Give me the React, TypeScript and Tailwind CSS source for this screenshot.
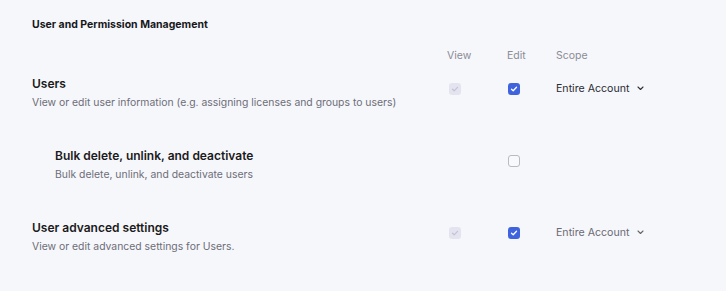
import React from "react";

function Box({ state }: { state: "checked" | "disabled" | "empty" }) {
  if (state === "checked")
    return (
      <div className="w-[12px] h-[12px] rounded-[3px] bg-[#3f63dc] flex items-center justify-center">
        <svg width="8" height="8" viewBox="0 0 8 8" fill="none">
          <path d="M1.5 4.2L3.2 5.8L6.5 2.3" stroke="white" strokeWidth="1.3" strokeLinecap="round" strokeLinejoin="round" />
        </svg>
      </div>
    );
  if (state === "disabled")
    return (
      <div className="w-[12px] h-[12px] rounded-[3px] bg-[#e3e4f0] flex items-center justify-center">
        <svg width="8" height="8" viewBox="0 0 8 8" fill="none">
          <path d="M1.5 4.2L3.2 5.8L6.5 2.3" stroke="#c3c4d0" strokeWidth="1.2" strokeLinecap="round" strokeLinejoin="round" />
        </svg>
      </div>
    );
  return <div className="w-[12px] h-[12px] rounded-[3px] border border-[#b9bac2] bg-[#f8f9fc]" />;
}

function Scope({ muted }: { muted?: boolean }) {
  return (
    <div className={"flex items-center text-[10.6px] " + (muted ? "text-[#6a6a74]" : "text-[#2a2a33]")}>
      <span>Entire Account</span>
      <svg className="ml-[8px]" width="7" height="5" viewBox="0 0 7 5" fill="none">
        <path d="M1 1L3.5 3.5L6 1" stroke={muted ? "#666" : "#333"} strokeWidth="1.1" strokeLinecap="round" strokeLinejoin="round" />
      </svg>
    </div>
  );
}

function Row({
  title,
  desc,
  indent,
  view,
  edit,
  scope,
  muted,
  className,
}: {
  title: string;
  desc: string;
  indent?: boolean;
  view?: "checked" | "disabled" | "empty";
  edit?: "checked" | "disabled" | "empty";
  scope?: boolean;
  muted?: boolean;
  className?: string;
}) {
  return (
    <div className={"flex " + (className ?? "")}>
      <div className={"w-[415px] flex flex-col " + (indent ? "pl-[23px]" : "")}>
        <div className="text-[12px] font-semibold text-[#1a1a20] leading-[20px]">{title}</div>
        <div className="text-[10.4px] text-[#6d6d78] leading-[18px]">{desc}</div>
      </div>
      <div className="w-[60px] pl-[2px] pt-[9px]">{view && <Box state={view} />}</div>
      <div className="w-[49px] pl-[1px] pt-[9px]">{edit && <Box state={edit} />}</div>
      <div className="pt-[7px]">{scope && <Scope muted={muted} />}</div>
    </div>
  );
}

export default function App() {
  return (
    <div
      className="w-[726px] h-[291px] bg-[#f6f7fb] pl-[32px] pt-[17px]"
      style={{ fontFamily: "Inter, 'Liberation Sans', sans-serif" }}
    >
      <div className="text-[10.5px] font-bold text-[#17171c] leading-[16px]">User and Permission Management</div>
      <div className="flex mt-[15px] text-[10.5px] text-[#8b8b95] leading-[16px]">
        <div className="w-[415px]" />
        <div className="w-[60px]">View</div>
        <div className="w-[49px]">Edit</div>
        <div>Scope</div>
      </div>
      <Row
        className="mt-[10px]"
        title="Users"
        desc="View or edit user information (e.g. assigning licenses and groups to users)"
        view="disabled"
        edit="checked"
        scope
      />
      <Row
        className="mt-[34px]"
        indent
        title="Bulk delete, unlink, and deactivate"
        desc="Bulk delete, unlink, and deactivate users"
        edit="empty"
      />
      <Row
        className="mt-[34px]"
        title="User advanced settings"
        desc="View or edit advanced settings for Users."
        view="disabled"
        edit="checked"
        scope
        muted
      />
    </div>
  );
}
